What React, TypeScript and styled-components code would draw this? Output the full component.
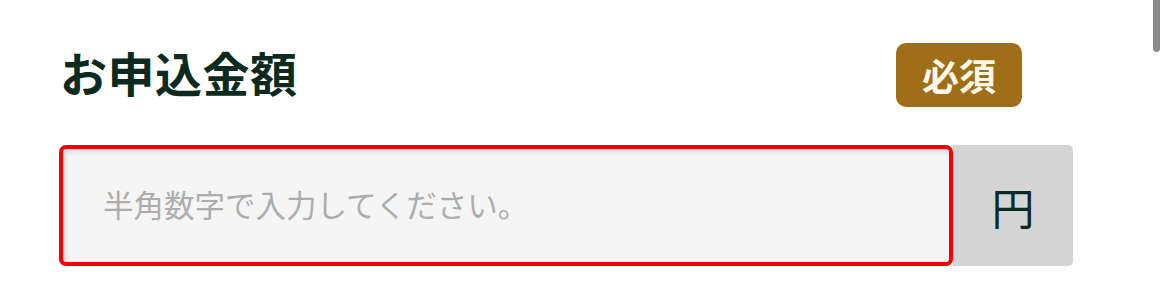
import React from 'react';
import styled, { createGlobalStyle } from 'styled-components';

const GlobalStyle = createGlobalStyle`
  html, body {
    margin: 0;
    padding: 0;
    background: #ffffff;
    font-family: "Noto Sans CJK JP", "Noto Sans", sans-serif;
    overflow: hidden;
  }
`;

const App = () => {
  return (
    <Page>
      <GlobalStyle />
      <FormField>
        <FieldHeader>
          <FieldLabel>お申込金額</FieldLabel>
          <RequiredBadge>必須</RequiredBadge>
        </FieldHeader>
        <InputGroup>
          <InputWrap $error>
            <AmountInput type="text" inputMode="numeric" placeholder="半角数字で入力してください。" />
          </InputWrap>
          <Unit>円</Unit>
        </InputGroup>
      </FormField>
      <ScrollThumb />
    </Page>
  );
};

const Page = styled.div`
  position: relative;
  width: 1170px;
  height: 300px;
  box-sizing: border-box;
  padding: 43px 0 0 59px;
`;

const FormField = styled.div`
  display: flex;
  flex-direction: column;
  gap: 38px;
  width: 1014px;
`;

const FieldHeader = styled.div`
  display: flex;
  flex-direction: row;
  align-items: center;
  justify-content: space-between;
  padding: 0 51px 0 1px;
  height: 64px;
`;

const FieldLabel = styled.h2`
  margin: 0 0 8px;
  font-size: 47px;
  line-height: 1;
  font-weight: 700;
  color: #0d2a1e;
  letter-spacing: 0.01em;
`;

const RequiredBadge = styled.span`
  display: flex;
  align-items: center;
  justify-content: center;
  width: 126px;
  height: 64px;
  border-radius: 10px;
  background: #9e6e18;
  color: #fff8e8;
  font-size: 37px;
  font-weight: 700;
  line-height: 1;
`;

const InputGroup = styled.div`
  display: flex;
  flex-direction: row;
  align-items: stretch;
  height: 121px;
`;

const InputWrap = styled.div<{ $error?: boolean }>`
  flex: 1;
  display: flex;
  box-sizing: border-box;
  border: 4px solid ${({ $error }) => ($error ? '#f20000' : '#cccccc')};
  border-radius: 7px;
  background: #f5f5f5;
  box-shadow: inset 3px 3px 5px rgba(0, 0, 0, 0.1);
  overflow: hidden;
`;

const AmountInput = styled.input`
  flex: 1;
  border: none;
  outline: none;
  background: transparent;
  padding: 0 0 4px 40px;
  font-family: "Noto Sans CJK JP", "Noto Sans", sans-serif;
  font-size: 30.5px;
  color: #333333;

  &::placeholder {
    color: #adadad;
  }
`;

const Unit = styled.div`
  display: flex;
  align-items: center;
  justify-content: center;
  width: 120px;
  background: #d4d4d4;
  border-radius: 0 5px 5px 0;
  font-size: 43px;
  font-weight: 400;
  color: #0d2a1e;
`;

const ScrollThumb = styled.div`
  position: absolute;
  top: -6px;
  right: 10px;
  width: 7px;
  height: 58px;
  border-radius: 4px;
  background: #8a8a8a;
`;

export default App;
